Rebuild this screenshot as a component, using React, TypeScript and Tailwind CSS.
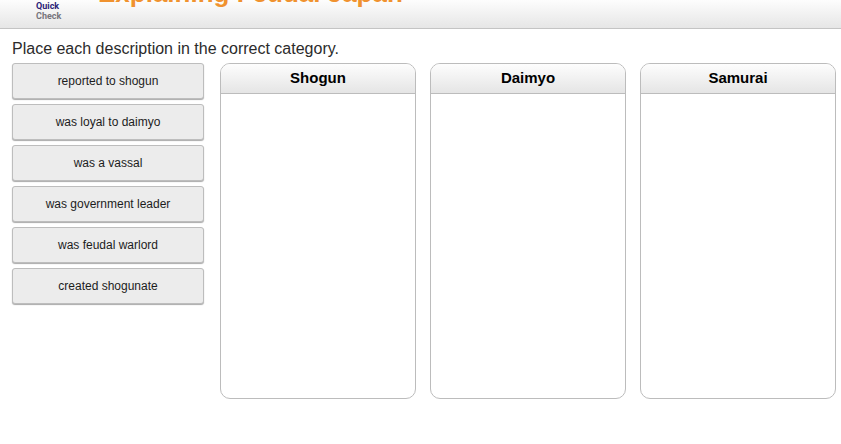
import { useState } from 'react';

const descriptions = [
  'reported to shogun',
  'was loyal to daimyo',
  'was a vassal',
  'was government leader',
  'was feudal warlord',
  'created shogunate',
];

const categories = ['Shogun', 'Daimyo', 'Samurai'];

function Header() {
  return (
    <header className="flex h-[29px] items-end overflow-hidden border-b border-[#c4c4c4] bg-linear-to-b from-[#fdfdfd] to-[#e6e6e6] pl-9">
      <div className="w-[62px] pb-[7px] font-['Liberation_Sans_Narrow',Roboto,sans-serif] text-[9px] leading-[10px] font-bold">
        <div className="text-[#2b2277]">Quick</div>
        <div className="text-[#77757c]">Check</div>
      </div>
      <h1 className="pb-[19px] text-[26px] leading-8 font-bold whitespace-nowrap text-[#f0922f]">
        Explaining Feudal Japan
      </h1>
    </header>
  );
}

export default function App() {
  const [selected, setSelected] = useState<string | null>(null);
  const [placed, setPlaced] = useState<Record<string, string>>({});

  const placeIn = (category: string) => {
    if (!selected) return;
    setPlaced({ ...placed, [selected]: category });
    setSelected(null);
  };

  const renderItem = (text: string) => (
    <button
      key={text}
      type="button"
      aria-pressed={selected === text}
      onClick={(e) => {
        e.stopPropagation();
        setSelected(selected === text ? null : text);
      }}
      className="h-9 w-full rounded-[3px] border border-[#bdbdbd] bg-[#ececec] text-xs text-[#1c1c1c] shadow-[0_1px_1px_#aaaaaa] aria-pressed:bg-[#dcdcdc]"
    >
      {text}
    </button>
  );

  return (
    <div className="min-h-screen bg-white font-['Liberation_Sans',Arial,sans-serif]">
      <Header />
      <main className="pt-2 pr-[5px] pb-11 pl-3">
        <p className="pb-0.5 text-base leading-6 text-[#2b2b2b]">
          Place each description in the correct category.
        </p>
        <div className="flex gap-4">
          <div className="flex w-48 shrink-0 flex-col gap-[5px]">
            {descriptions.filter((text) => !placed[text]).map(renderItem)}
          </div>
          <div className="grid flex-1 grid-cols-3 gap-[14px]">
            {categories.map((category) => (
              <section
                key={category}
                onClick={() => placeIn(category)}
                className="min-h-84 overflow-hidden rounded-[10px] border border-[#bcbcbc] bg-white"
              >
                <h2 className="border-b border-[#bcbcbc] bg-linear-to-b from-[#fdfdfd] to-[#e5e5e5] pb-0.5 text-center text-[15px] leading-[27px] font-bold text-black">
                  {category}
                </h2>
                <div className="flex flex-col gap-[5px] p-2 empty:hidden">
                  {descriptions.filter((text) => placed[text] === category).map(renderItem)}
                </div>
              </section>
            ))}
          </div>
        </div>
      </main>
    </div>
  );
}
